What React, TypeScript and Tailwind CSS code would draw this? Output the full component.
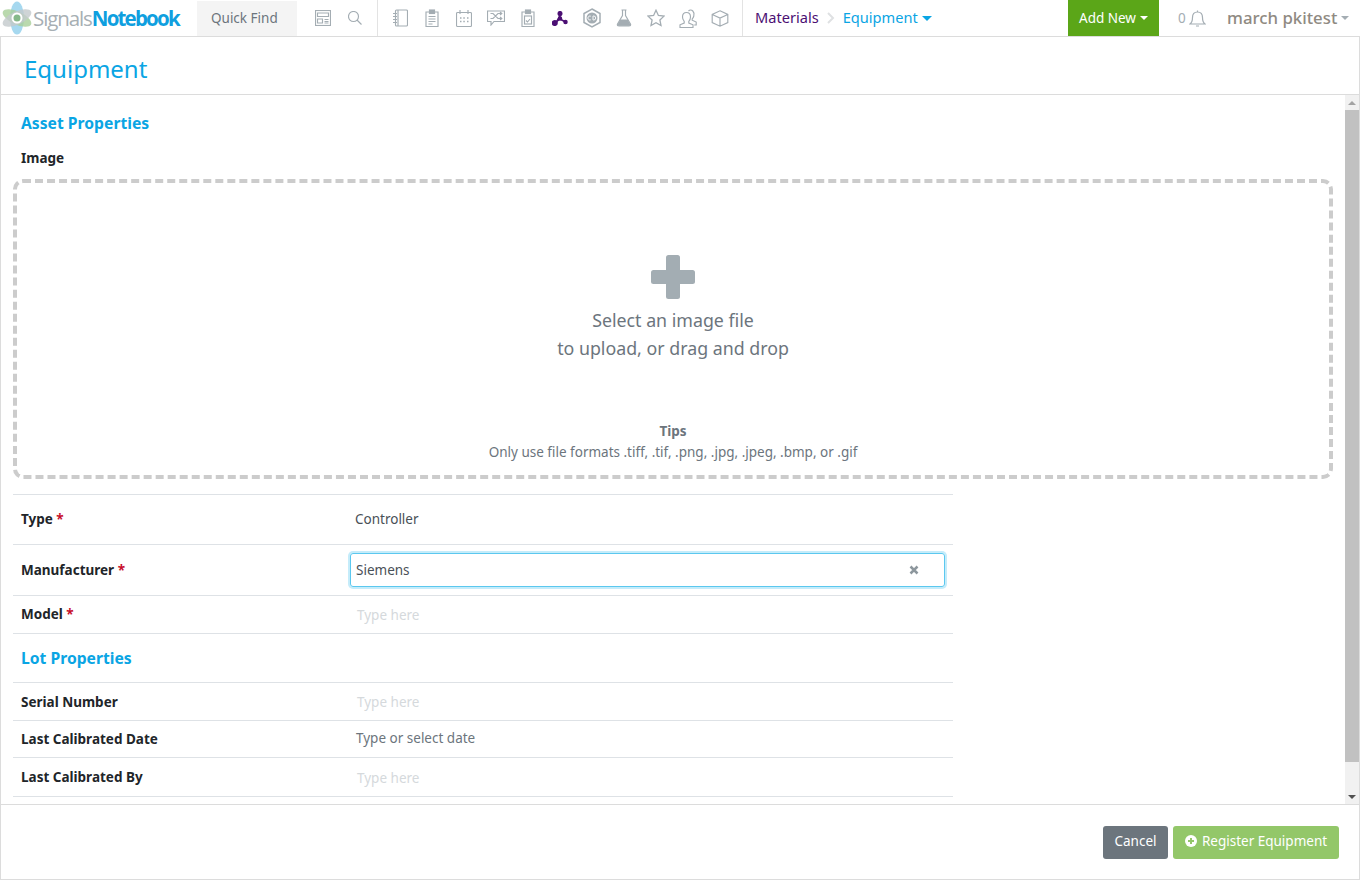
import React from "react";

const S = ({ children, w = 18, h = 18, vb = "0 0 18 18", c = "#a4adb3" }: any) => (
  <svg width={w} height={h} viewBox={vb} fill="none" stroke={c} strokeWidth="1.150">
    {children}
  </svg>
);

const icons: React.ReactNode[] = [
  <S key="a" w={15} vb="0 0 15 18"><rect x="2.500" y="1" width="12" height="16" rx="1" /><path d="M5 1v16M0 4.500h4M0 7.500h4M0 10.500h4M0 13.500h4" /></S>,
  <S key="b" w={14} vb="0 0 14 18"><path d="M4 3H1v14.500h12V3h-3" /><rect x="4.500" y="1" width="5" height="3.500" fill="#a4adb3" /><path d="M3.500 7.500h7M3.500 10h7M3.500 12.500h7M3.500 15h4" /></S>,
  <S key="c" w={16} h={17} vb="0 0 16 17"><rect x=".5" y="2.500" width="15" height="14" rx="1" /><path d="M4 0v4M12 0v4" /><path d="M4 8h1.500M7.300 8h1.500M11 8h1.500M4 11.500h1.500M7.300 11.500h1.500M11 11.500h1.500" strokeWidth="1.600" /></S>,
  <S key="d" h={16} vb="0 0 18 16"><path d="M.5 1h17v10.500H7l-3 3.500v-3.500H.5z" /><path d="M3.500 3.500h2.500l5 5h3.500M3.500 8.500h2.500l5-5h3.500M13 2l1.800 1.500L13 5M13 7l1.800 1.500L13 10" /></S>,
  <S key="e" w={14} vb="0 0 14 18"><path d="M4 3H1v14.500h12V3h-3" /><rect x="4.500" y="1" width="5" height="3.500" fill="#a4adb3" /><rect x="3.500" y="7" width="7" height="8" /><path d="M5 11.500l1.500 1.500L9 10" /></S>,
  <svg key="f" width="16" height="15" viewBox="0 0 16 15" fill="#4b0f73" stroke="#4b0f73" strokeWidth="1.500"><path d="M8 3v5L3 12M8 8l5.500 3" /><circle cx="8" cy="2.500" r="1.800" /><circle cx="2.800" cy="12" r="2.300" /><circle cx="13.500" cy="11" r="1.500" /><circle cx="8" cy="7.500" r="1.500" /></svg>,
  <svg key="g" width="18" height="20" viewBox="0 0 18 20" fill="none"><path d="M9 1l8 4.500v9L9 19l-8-4.500v-9z" stroke="#a4adb3" strokeWidth="1.500" /><circle cx="9" cy="10" r="5.500" fill="#a4adb3" /><path d="M7.800 8.200a2 2 0 1 0 0 3.600M10 8v4h.7a2 2 0 0 0 0-4z" stroke="#fff" strokeWidth=".9" /></svg>,
  <svg key="h" width="16" height="18" viewBox="0 0 16 18" fill="none"><path d="M5.500 1h5M6.500 1v5.500L1.500 15a1.200 1.200 0 0 0 1 1.800h11a1.200 1.200 0 0 0 1-1.800L9.500 6.500V1" stroke="#a4adb3" strokeWidth="1.150" /><path d="M4.300 10.500h7.400l3 5.500a.6.600 0 0 1-.6.800H1.900a.6.600 0 0 1-.6-.8z" fill="#a4adb3" /></svg>,
  <S key="i"><path d="M9 1.200l2.400 5.200 5.600.7-4.100 3.900 1.100 5.600L9 13.800l-5 2.800 1.100-5.600L1 7.100l5.600-.7z" strokeWidth="1.300" /></S>,
  <S key="j" h={19} vb="0 0 18 19"><path d="M7.500 3.500c-2.500 0-4 2-4 4.500 0 2 .8 3.300 1.700 4.300v1.700L1 15.800v2.700h13v-2.700L9.800 14v-1.700c1-1 1.700-2.300 1.700-4.300 0-2.500-1.500-4.500-4-4.500z" /><path d="M9.500 2c1-1 3-1.300 4.300 0 1.200 1.200 1.500 3 1 5-.3 1.300-.9 2.200-1.600 2.900v1.300l4 1.800V16h-2" /></S>,
  <S key="k" h={17} vb="0 0 18 17"><path d="M9 .8l7.800 3.600v8.200L9 16.200l-7.800-3.600V4.400zM1.200 4.400L9 8l7.800-3.600M9 8v8.200" /></S>,
];

const Label = ({ children, req, cn }: { children: string; req?: boolean; cn?: string }) => (
  <div className={`w-[334px] shrink-0 pl-2 font-bold text-[#212529] ${cn ?? ""}`}>
    {children}
    {req && <span className="text-[#c8102e]"> *</span>}
  </div>
);

const Row = ({ h, label, req, children, cn }: any) => (
  <div className={`flex items-center border-b border-[#dee2e6] ${h}`}>
    <Label req={req} cn={cn}>{label}</Label>
    {children}
  </div>
);

const Hint = ({ children }: { children: string }) => (
  <div className="pl-[10px] pt-[2px] text-[#d5d9dc]">{children}</div>
);

export default function App() {
  return (
    <div className="flex h-[880px] w-[1360px] flex-col overflow-hidden bg-white font-['Noto_Sans',sans-serif] text-[13.5px] text-[#212529]">
      <header className="flex h-[37px] shrink-0 border-b border-[#dcdcdc]">
        <div className="flex w-[197px] shrink-0 items-center">
          <svg width="34" height="36" viewBox="0 0 34 36" className="shrink-0">
            <ellipse cx="17" cy="18" rx="7" ry="16.500" fill="#a6d8ef" />
            <ellipse cx="17" cy="18" rx="15.500" ry="6.500" fill="#a9cf9a" transform="rotate(25 17 18)" opacity=".8" />
            <ellipse cx="17" cy="18" rx="15.500" ry="6.500" fill="#c3c9cc" transform="rotate(-25 17 18)" opacity=".8" />
            <circle cx="17" cy="18" r="5.500" fill="#fff" />
            <circle cx="17" cy="18" r="3.500" fill="#86b98a" />
          </svg>
          <span className="-ml-[1px] text-[20.500px] font-['Open_Sans',sans-serif]">
            <span className="font-medium tracking-[-1.100px] text-[#a7afb4]">Signals</span>
            <span className="font-bold tracking-[-1.800px] text-[#0f9fdf]">Notebook</span>
          </span>
        </div>
        <div className="mt-[1px] flex w-[100px] shrink-0 items-center bg-[#f4f4f4] pl-[14px] text-[#6c757d]">Quick Find</div>
        <div className="flex w-[81px] shrink-0 items-center border-r border-[#e3e3e3] pl-[10px]">
          <div className="flex w-8 justify-center">
            <S w={16} h={16} vb="0 0 16 16"><rect x=".5" y=".5" width="15" height="15" /><path d="M2.500 3h11v3.500h-11zM2.500 9h5v4h-5zM9.500 9.500h4M9.500 11.500h4M9.500 13h4" /></S>
          </div>
          <div className="flex w-8 justify-center">
            <S w={14} h={14} vb="0 0 14 14"><circle cx="5.500" cy="5.500" r="5" /><path d="M9 9l4.500 4.500" /></S>
          </div>
        </div>
        <div className="flex w-[365px] shrink-0 items-center border-r border-[#e3e3e3] pl-[6px]">
          {icons.map((ic, i) => (
            <div key={i} className="flex w-8 shrink-0 justify-center">{ic}</div>
          ))}
        </div>
        <div className="flex flex-1 items-center pl-[12px] text-[14.600px]">
          <span className="text-[#4b0f73]">Materials</span>
          <svg width="8" height="12" viewBox="0 0 8 12" fill="none" stroke="#dfe1e3" strokeWidth="2" className="mx-[8px]"><path d="M1 1l5 5-5 5" /></svg>
          <span className="text-[#0aa5e4]">Equipment</span>
          <span className="ml-[4px] h-0 w-0 border-x-[5px] border-t-[5px] border-x-transparent border-t-[#0aa5e4]" />
        </div>
        <div className="flex w-[91px] shrink-0 items-center justify-center gap-[4px] bg-[#5ba618] text-white">
          Add New
          <span className="h-0 w-0 border-x-[4px] border-t-[4px] border-x-transparent border-t-white" />
        </div>
        <div className="flex w-[68px] shrink-0 items-center pl-[19px] text-[#a4adb3]">
          0
          <svg width="17" height="19" viewBox="0 0 17 19" fill="none" stroke="#a4adb3" strokeWidth="1.200" className="ml-[3px]"><path d="M1 15c2-1.500 2.500-3 2.500-6.500C3.500 5 5.500 3 8.500 3s5 2 5 5.500c0 3.500.5 5 2.500 6.500zM8.500 3V1.500M7 17h3" /></svg>
        </div>
        <div className="flex w-[133px] shrink-0 items-center text-[16.800px] font-medium text-[#8f8a82]">
          march pkitest
          <span className="ml-[4px] h-0 w-0 border-x-[4px] border-t-[4px] border-x-transparent border-t-[#a4adb3]" />
        </div>
      </header>

      <main className="flex min-h-0 flex-1 flex-col border-x border-b border-[#dcdcdc]">
        <div className="flex h-[58px] shrink-0 items-center border-b border-[#dcdcdc] pl-[23px] pt-[7px] text-[24px] text-[#0aa5e4]">Equipment</div>
        <div className="flex min-h-0 flex-1">
          <div className="min-w-0 flex-1 pl-[12px] pr-[12px]">
            <h2 className="flex h-[57px] items-center pl-2 pt-[1px] text-[15.700px] font-bold text-[#0aa5e4]">Asset Properties</h2>
            <div className="flex h-[12px] items-center pl-2 font-bold">Image</div>
            <div className="mt-[15px] flex h-[300px] flex-col items-center rounded-[10px] border-[4px] border-dashed border-[#cccccc] text-[#6c757d]">
              <div className="mt-[72px] h-[44px] w-[44px] shrink-0">
                <svg width="44" height="44" viewBox="0 0 44 44" fill="#a3adb3"><rect x="15" y="0" width="14" height="44" rx="2.500" /><rect x="0" y="15" width="44" height="14" rx="2.500" /></svg>
              </div>
              <div className="mt-[7px] text-center text-[17.800px] leading-[28px]">
                <div>Select an image file</div>
                <div>to upload, or drag and drop</div>
              </div>
              <div className="mt-[59px] font-bold leading-[21px]">Tips</div>
              <div className="leading-[21px]">Only use file formats .tiff, .tif, .png, .jpg, .jpeg, .bmp, or .gif</div>
            </div>
            <div className="mt-[15px] w-[940px] border-t border-[#dee2e6]">
              <Row h="h-[50px]" label="Type" req>
                <div className="pl-[8px] text-[#495057]">Controller</div>
              </Row>
              <Row h="h-[51px]" label="Manufacturer" req>
                <div className="ml-[3px] flex h-[34px] w-[595px] items-center justify-between rounded-[3px] border border-[#5bc8ef] pl-[5px] pr-[25px] text-[#495057] shadow-[0_0_0_2px_#c5ecfa]">
                  Siemens
                  <svg width="10" height="10" viewBox="0 0 10 10" stroke="#8d979d" strokeWidth="2.500"><path d="M1.500 1.500l7 7M8.500 1.500l-7 7" /></svg>
                </div>
              </Row>
              <Row h="h-[38px]" label="Model" req><Hint>Type here</Hint></Row>
              <h2 className="flex h-[49px] items-center border-b border-[#dee2e6] pl-2 pt-[2px] text-[15.700px] font-bold text-[#0aa5e4]">Lot Properties</h2>
              <Row h="h-[38px]" label="Serial Number" cn="pt-[1px]"><Hint>Type here</Hint></Row>
              <Row h="h-[37px]" label="Last Calibrated Date"><div className="mb-[2px] pl-[9px] text-[#6c757d]">Type or select date</div></Row>
              <Row h="h-[39px]" label="Last Calibrated By"><Hint>Type here</Hint></Row>
            </div>
          </div>
          <div className="flex w-[14px] shrink-0 flex-col bg-[#f1f1f1]">
            <div className="flex h-[15px] items-center justify-center">
              <span className="h-0 w-0 border-x-[4px] border-b-[4px] border-x-transparent border-b-[#a3a3a3]" />
            </div>
            <div className="h-[652px] bg-[#c1c1c1]" />
            <div className="flex-1" />
            <div className="flex h-[14px] items-center justify-center">
              <span className="h-0 w-0 border-x-[4px] border-t-[4px] border-x-transparent border-t-[#505050]" />
            </div>
          </div>
        </div>
        <footer className="flex h-[75px] shrink-0 items-center justify-end gap-[5px] border-t border-[#dcdcdc] pr-[20px]">
          <button className="flex h-[33px] w-[65px] items-center justify-center rounded-[3px] bg-[#6c757d] pb-[2px] text-white">Cancel</button>
          <button className="flex h-[33px] w-[166px] items-center justify-center gap-[5px] rounded-[3px] bg-[#93c769] pb-[2px] text-white">
            <svg width="12" height="12" viewBox="0 0 12 12"><circle cx="6" cy="6" r="6" fill="#fff" /><path d="M6 3v6M3 6h6" stroke="#93c769" strokeWidth="2" /></svg>
            Register Equipment
          </button>
        </footer>
      </main>
    </div>
  );
}
